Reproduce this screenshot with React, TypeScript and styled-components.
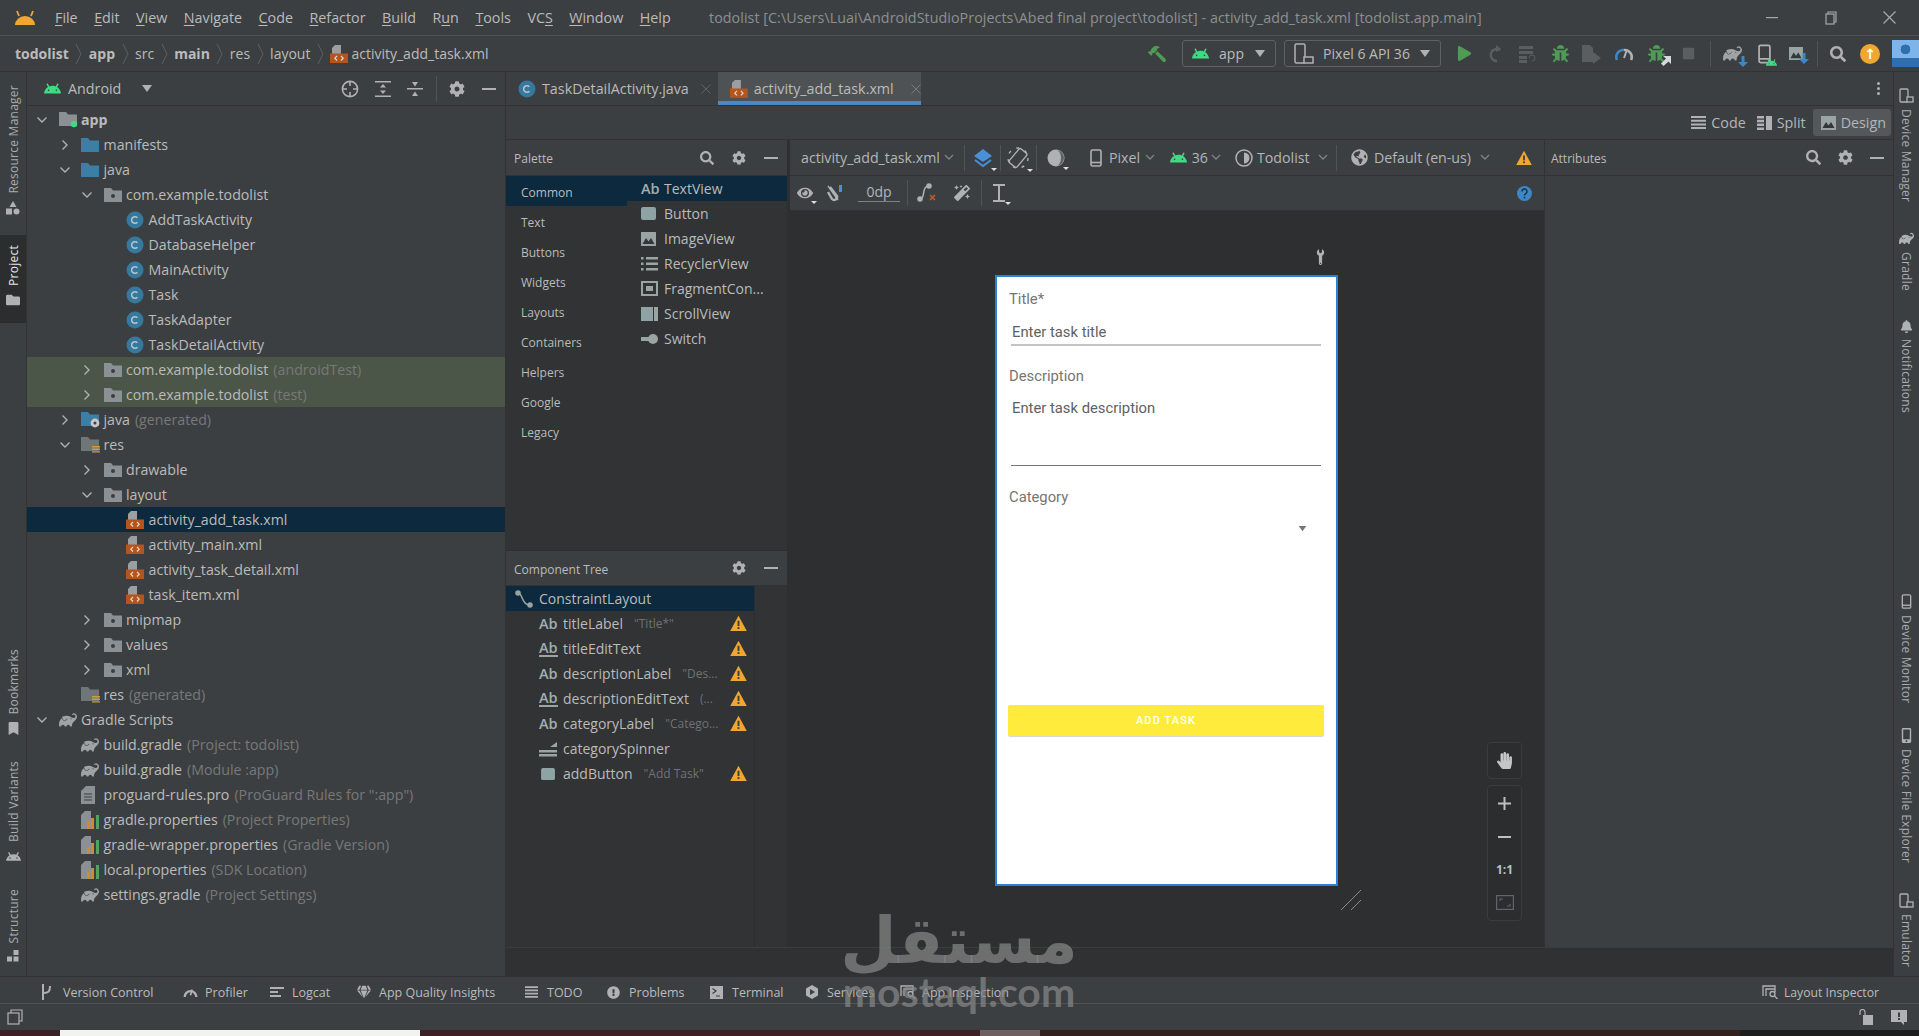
import React from 'react'
import styled, { createGlobalStyle } from 'styled-components'
import { SiAndroid, SiGradle } from 'react-icons/si'
import {
  FaBug, FaCog, FaEye, FaGlobeAmericas, FaHandPaper, FaMagic, FaPlay, FaSearch, FaWrench,
  FaBookmark, FaBell, FaMobileAlt, FaFolder, FaStop, FaHammer, FaExclamationCircle, FaGem,
} from 'react-icons/fa'

const UI = `"Open Sans", "Noto Sans", sans-serif`
const GREY = '#afb1b3'

const GlobalStyle = createGlobalStyle`
    html, body { margin: 0; padding: 0; background: #3c3f41; }
    body { font-family: ${UI}; font-size: 13px; color: #bbbbbb; overflow: hidden; }
    * { box-sizing: border-box; }
`

/* ---------- styles ---------- */

const Page = styled.div`
    position: relative;
    width: 1919px;
    height: 1036px;
    display: flex;
    flex-direction: column;
    background: #3c3f41;
    overflow: hidden;
`

const TitleBar = styled.header`
    height: 36px;
    display: flex;
    align-items: center;
    border-bottom: 1px solid #515456;
    flex: none;
`

const LogoSlot = styled.div`
    width: 55px;
    padding-left: 14px;
    display: flex;
`

const MenuRow = styled.nav`
    display: flex;
    gap: 16.5px;
    width: 654px;
`

const MenuEntry = styled.span`
    font-size: 14.3px;
    color: #bbbbbb;
    white-space: nowrap;
    u { text-underline-offset: 2px; }
`

const WindowTitle = styled.div`
    font-size: 14.3px;
    letter-spacing: 0.05px;
    color: #8c8f91;
    white-space: nowrap;
`

const WindowButtons = styled.div`
    margin-left: auto;
    display: flex;
`

const WindowButton = styled.div`
    width: 59px;
    height: 20px;
    display: flex;
    align-items: center;
    justify-content: center;
`

const NavBar = styled.div`
    height: 36px;
    display: flex;
    align-items: center;
    flex: none;
    border-bottom: 1px solid #323232;
`

const Crumbs = styled.div`
    display: flex;
    align-items: center;
    gap: 6.5px;
    padding-left: 15px;
`

const CrumbText = styled.span<{ $bold?: boolean }>`
    font-size: 14px;
    font-weight: ${p => (p.$bold ? 700 : 400)};
    color: #bbbbbb;
    white-space: nowrap;
`

const CrumbFile = styled.span`
    display: flex;
    align-items: center;
    gap: 3px;
`

const RunTools = styled.div`
    margin-left: auto;
    display: flex;
    align-items: center;
`

const Slot = styled.span<{ $w: number }>`
    width: ${p => p.$w}px;
    flex: none;
    display: flex;
    align-items: center;
    justify-content: center;
`

const TextSlot = styled.span<{ $w: number }>`
    width: ${p => p.$w}px;
    flex: none;
    font-size: 14.2px;
    color: #b4b6b8;
    white-space: nowrap;
`

const EndSlot = styled.span`
    margin-left: auto;
    width: 30px;
    margin-right: 5px;
    display: flex;
    justify-content: center;
`

const Sep = styled.i`
    display: block;
    width: 1px;
    height: 26px;
    background: #515456;
`

const RunCombo = styled.div<{ $w: number }>`
    width: ${p => p.$w}px;
    height: 27px;
    margin: 0 4px;
    padding: 0 9px;
    display: flex;
    align-items: center;
    justify-content: space-between;
    border: 1px solid #5e6163;
    border-radius: 3px;
    font-size: 14px;
    color: #bbbbbb;
    white-space: nowrap;
`

const Upgrade = styled.span`
    width: 20px;
    height: 20px;
    border-radius: 50%;
    background: #f0a732;
    color: #fff;
    font: 700 14px/20px "DejaVu Sans", sans-serif;
    text-align: center;
`

const Avatar = styled.span`
    width: 27px;
    height: 27px;
    margin-left: 6px;
    background: radial-gradient(circle at 50% 35%, #2f6fb0 0 22%, transparent 23%),
        linear-gradient(to top, #2f6fb0 0 35%, #7fb4ea 35%);
`

const HammerIcon = styled(FaHammer)`
    transform: scaleX(-1);
`

const Badged = styled.span`
    position: relative;
    display: flex;
`

const Badge = styled.span`
    position: absolute;
    right: -6px;
    bottom: -4px;
    display: flex;
`

const Workspace = styled.main`
    flex: 1;
    min-height: 0;
    display: flex;
`

const LeftStripe = styled.aside`
    width: 27px;
    flex: none;
    display: flex;
    flex-direction: column;
    justify-content: space-between;
    padding-bottom: 14px;
    border-right: 1px solid #323232;
`

const RightStripe = styled.aside`
    width: 26px;
    flex: none;
    display: flex;
    flex-direction: column;
    justify-content: space-between;
    padding-bottom: 9px;
    border-left: 1px solid #323232;
`

const StripeGroup = styled.div`
    display: flex;
    flex-direction: column;
`

const LeftItem = styled.div<{ $active?: boolean; $top?: number }>`
    display: flex;
    flex-direction: column;
    align-items: center;
    gap: 7px;
    margin-top: ${p => p.$top ?? 0}px;
    padding: ${p => (p.$active ? '10px 0 16px' : '0')};
    background: ${p => (p.$active ? '#2b2d2f' : 'transparent')};
`

const RightItem = styled.div<{ $top?: number }>`
    display: flex;
    flex-direction: column;
    align-items: center;
    gap: 6px;
    margin-top: ${p => p.$top ?? 0}px;
`

const StripeText = styled.span<{ $down?: boolean; $bright?: boolean }>`
    writing-mode: vertical-rl;
    transform: ${p => (p.$down ? 'none' : 'rotate(180deg)')};
    font-size: 12px;
    letter-spacing: 0.25px;
    color: ${p => (p.$bright ? '#e4e6e8' : '#a9abad')};
    white-space: nowrap;
`

const ProjectPanel = styled.section`
    width: 479px;
    flex: none;
    display: flex;
    flex-direction: column;
    border-right: 1px solid #323232;
`

const PanelHead = styled.div`
    height: 34px;
    flex: none;
    display: flex;
    align-items: center;
    justify-content: space-between;
    border-bottom: 1px solid #323232;
`

const ProjectTitle = styled.div`
    display: flex;
    align-items: center;
    gap: 7px;
    padding-left: 17px;
    font-size: 14.3px;
    color: #bbbbbb;
`

const HeadTools = styled.div`
    display: flex;
    align-items: center;
`

const Tree = styled.div`
    padding-top: 1px;
`

const TreeLine = styled.div<{ $depth: number; $tint?: 'test' | 'selected' }>`
    height: 25px;
    display: flex;
    align-items: center;
    padding-left: ${p => 6 + p.$depth * 22.5}px;
    background: ${p => (p.$tint === 'test' ? '#4b5648' : p.$tint === 'selected' ? '#0d293e' : 'transparent')};
`

const ArrowSlot = styled.span`
    width: 25.5px;
    flex: none;
    padding-left: 3px;
    display: flex;
    align-items: center;
`

const TreeIcon = styled.span`
    width: 22.5px;
    flex: none;
    display: flex;
    align-items: center;
`

const TreeLabel = styled.span<{ $bold?: boolean }>`
    font-size: 14.2px;
    font-weight: ${p => (p.$bold ? 700 : 400)};
    color: #bbbbbb;
    white-space: nowrap;
`

const TreeHint = styled.span`
    margin-left: 5px;
    font-size: 14.2px;
    color: #787878;
    white-space: nowrap;
`

const Center = styled.div`
    flex: 1;
    min-width: 0;
    display: flex;
    flex-direction: column;
`

const TabBar = styled.div`
    height: 34px;
    flex: none;
    display: flex;
    border-bottom: 1px solid #323232;
`

const Tab = styled.div<{ $w: number; $active?: boolean }>`
    width: ${p => p.$w}px;
    flex: none;
    display: flex;
    align-items: center;
    gap: 6px;
    padding-left: 12px;
    background: ${p => (p.$active ? '#4e5254' : 'transparent')};
    border-bottom: ${p => (p.$active ? '4px solid #4a88c7' : '0')};
    padding-top: ${p => (p.$active ? '4px' : '0')};
`

const TabName = styled.span`
    font-size: 14.3px;
    color: #bbbbbb;
    white-space: nowrap;
    width: 153px;
`

const Kebab = styled.div`
    margin-left: auto;
    width: 30px;
    display: flex;
    flex-direction: column;
    align-items: center;
    justify-content: center;
    gap: 2px;
    i { width: 3px; height: 3px; background: ${GREY}; border-radius: 50%; }
`

const ModeBar = styled.div`
    height: 34px;
    flex: none;
    display: flex;
    justify-content: flex-end;
    align-items: center;
    padding-right: 2px;
    border-bottom: 1px solid #323232;
`

const ModeButton = styled.div<{ $active?: boolean }>`
    height: 27px;
    display: flex;
    align-items: center;
    gap: 5px;
    padding: 0 ${p => (p.$active ? '5px' : '7px')} 0 ${p => (p.$active ? '8px' : '4px')};
    border-radius: 3px;
    background: ${p => (p.$active ? '#54585a' : 'transparent')};
    font-size: 14.3px;
    color: #b4b6b8;
`

const DesignArea = styled.div`
    flex: 1;
    min-height: 0;
    display: flex;
    flex-direction: column;
`

const DesignRow = styled.div`
    flex: 1;
    min-height: 0;
    display: flex;
`

const BottomStrip = styled.div`
    height: 29px;
    flex: none;
    background: #2f3133;
    border-top: 1px solid #3a3c3e;
`

const PaletteColumn = styled.div`
    width: 284px;
    flex: none;
    display: flex;
    flex-direction: column;
    background: #313335;
    border-right: 3px solid #2d2f31;
`

const ColumnHead = styled.div<{ $tight?: boolean }>`
    height: 36px;
    flex: none;
    display: flex;
    align-items: center;
    justify-content: space-between;
    background: #3c3f41;
    border-bottom: 1px solid #323232;
    border-top: ${p => (p.$tight ? '1px solid #2b2d2e' : '0')};
`

const HeadTitle = styled.span<{ $left?: number }>`
    padding: 2px 0 0 ${p => p.$left ?? 8}px;
    font-size: 12px;
    color: #bbbbbb;
`

const PaletteBody = styled.div`
    height: 374px;
    flex: none;
    display: flex;
`

const GroupList = styled.div`
    width: 121px;
    flex: none;
`

const GroupItem = styled.div<{ $selected?: boolean }>`
    height: 30px;
    display: flex;
    align-items: center;
    padding: 3px 0 0 15px;
    font-size: 12px;
    color: #bbbbbb;
    background: ${p => (p.$selected ? '#0d293e' : 'transparent')};
`

const ItemList = styled.div`
    flex: 1;
`

const PaletteItem = styled.div<{ $selected?: boolean }>`
    height: 25px;
    display: flex;
    align-items: center;
    font-size: 14px;
    color: #bbbbbb;
    white-space: nowrap;
    background: ${p => (p.$selected ? '#0d293e' : 'transparent')};
`

const ItemIcon = styled.span`
    width: 37px;
    flex: none;
    display: flex;
    align-items: center;
    padding-left: 14px;
`

const AbGlyph = styled.span<{ $underline?: boolean }>`
    font-size: 14.5px;
    line-height: 14px;
    color: #a3adad;
    font-weight: 600;
    border-bottom: ${p => (p.$underline ? '2px solid #9aa5a3' : '0')};
`

const TreeBody = styled.div`
    flex: 1;
    display: flex;
`

const ComponentList = styled.div`
    width: 249px;
    border-right: 1px solid #2b2d2e;
`

const RootRow = styled.div`
    height: 25px;
    display: flex;
    align-items: center;
    gap: 6px;
    padding-left: 9px;
    font-size: 14px;
    color: #bbbbbb;
    background: #0d293e;
`

const ComponentRow = styled.div`
    height: 25px;
    display: flex;
    align-items: center;
    padding-left: 33px;
    font-size: 14px;
    color: #bbbbbb;
    white-space: nowrap;
    position: relative;
`

const ComponentIcon = styled.span`
    width: 24px;
    flex: none;
    display: flex;
`

const ComponentHint = styled.span`
    margin-left: 11px;
    font-size: 12px;
    color: #707274;
`

const WarnSlot = styled.span`
    position: absolute;
    left: 224px;
    top: 4px;
    display: flex;
`

const Editor = styled.div`
    width: 755px;
    flex: none;
    display: flex;
    flex-direction: column;
    border-right: 1px solid #323232;
`

const EditorTools = styled.div<{ $short?: boolean }>`
    height: ${p => (p.$short ? 35 : 36)}px;
    flex: none;
    display: flex;
    align-items: center;
    border-bottom: 1px solid #323232;
`

const MenuMark = styled.span`
    position: relative;
    display: flex;
`

const MenuArrow = styled.i`
    position: absolute;
    right: -4px;
    bottom: -3px;
    border-left: 3px solid transparent;
    border-right: 3px solid transparent;
    border-top: 3px solid #dddddd;
`

const DpBox = styled.span`
    width: 42px;
    flex: none;
    text-align: center;
    font-size: 14px;
    line-height: 16px;
    color: #b4b6b8;
    border-bottom: 1px solid #7f8385;
    padding-bottom: 1px;
`

const Canvas = styled.div`
    flex: 1;
    min-height: 0;
    position: relative;
    padding: 64px 0 0 205px;
    background: #2d2f31;
`

const PhoneFrame = styled.div`
    position: relative;
    width: 343px;
    height: 611px;
    padding: 12px 0 0 12px;
    background: #ffffff;
    border: 2px solid #2a7fd6;
    font-family: Roboto, sans-serif;
`

const WrenchMark = styled.span`
    position: absolute;
    top: -27px;
    right: 9px;
    display: flex;
    transform: rotate(-45deg);
`

const ResizeMark = styled.span`
    position: absolute;
    right: -26px;
    bottom: -27px;
    display: flex;
`

const FieldLabel = styled.div<{ $gap?: number }>`
    height: 20px;
    margin-top: ${p => p.$gap ?? 0}px;
    font-size: 14.8px;
    line-height: 20px;
    color: #757575;
`

const FieldInput = styled.div<{ $tall?: boolean }>`
    width: 310px;
    height: ${p => (p.$tall ? 68 : 27)}px;
    margin: ${p => (p.$tall ? '12px' : '10px')} 0 0 2px;
    padding: ${p => (p.$tall ? '0' : '3px')} 0 0 1px;
    font-size: 14.8px;
    line-height: 20px;
    color: #616161;
    border-bottom: ${p => (p.$tall ? '1px solid #757575' : '2px solid #c4c4c4')};
`

const SpinnerBox = styled.div`
    width: 298px;
    height: 24px;
    margin-top: 10px;
    display: flex;
    align-items: center;
    justify-content: flex-end;
`

const AddButton = styled.div`
    width: 316px;
    height: 31px;
    margin: 164px 0 0 -1px;
    display: flex;
    align-items: center;
    justify-content: center;
    border-radius: 2px;
    background: #ffeb3b;
    box-shadow: 0 1px 1px #d5d5d5;
    font-size: 11px;
    font-weight: 500;
    letter-spacing: 1.1px;
    color: #ffffff;
`

const ZoomControls = styled.div`
    position: absolute;
    right: 22px;
    bottom: 26px;
    display: flex;
    flex-direction: column;
    gap: 6px;
`

const ZoomBox = styled.div`
    width: 35px;
    border: 1px solid #3a3c3e;
    border-radius: 4px;
    background: #2b2d2f;
    padding: 1px 0;
`

const ZoomKey = styled.div`
    height: 33px;
    display: flex;
    align-items: center;
    justify-content: center;
    font-size: 12px;
    font-weight: 700;
    color: #bdbfc1;
`

const Attributes = styled.div`
    flex: 1;
    min-width: 0;
`

const ToolStrip = styled.div`
    height: 28px;
    flex: none;
    display: flex;
    align-items: center;
    padding: 4px 0 0 41px;
    border-top: 1px solid #323232;
    border-bottom: 1px solid #515456;
`

const ToolItem = styled.div<{ $w: number }>`
    width: ${p => p.$w}px;
    flex: none;
    display: flex;
    align-items: center;
    font-size: 12.5px;
    color: #bbbbbb;
    white-space: nowrap;
`

const ToolItemEnd = styled.div`
    margin-left: auto;
    padding-right: 40px;
    display: flex;
    align-items: center;
    font-size: 12.2px;
    color: #bbbbbb;
    white-space: nowrap;
`

const ToolIcon = styled.span`
    width: 22px;
    flex: none;
    display: flex;
    align-items: center;
`

const StatusBar = styled.div`
    height: 26px;
    flex: none;
    display: flex;
    align-items: center;
    justify-content: space-between;
    padding: 0 12px 0 7px;
`

const StatusRight = styled.div`
    display: flex;
    align-items: center;
    gap: 18px;
`

const Taskbar = styled.div`
    height: 6px;
    flex: none;
    display: flex;
`

const TaskPiece = styled.span<{ $w: number; $color: string }>`
    width: ${p => p.$w}px;
    background: ${p => p.$color};
`

const Watermark = styled.div`
    position: absolute;
    left: 844px;
    top: 896px;
    width: 230px;
    display: flex;
    flex-direction: column;
    align-items: center;
    pointer-events: none;
    color: rgba(135, 135, 135, 0.72);
`

const WatermarkArabic = styled.div`
    font: 700 65px/90px "DejaVu Sans", sans-serif;
    direction: rtl;
    white-space: nowrap;
`

const WatermarkLatin = styled.div`
    margin-top: -15px;
    font: 700 41px/42px Lato, sans-serif;
    white-space: nowrap;
`

/* ---------- little drawings ---------- */

const Chevron = ({ open }: { open?: boolean }) => (
    <svg width="12" height="12" viewBox="0 0 12 12" fill="none" stroke={GREY} strokeWidth="1.4">
        <path d={open ? 'M1.5 3.5 6 8l4.5-4.5' : 'M3.5 1.5 8 6l-4.5 4.5'} />
    </svg>
)

const SmallDown = () => (
    <svg width="10" height="7" viewBox="0 0 10 7" fill="none" stroke="#7f8385" strokeWidth="1.3">
        <path d="M1 1l4 4 4-4" />
    </svg>
)

const Caret = ({ color = GREY, w = 12 }: { color?: string; w?: number }) => (
    <svg width={w} height={(w * 2) / 3} viewBox="0 0 12 8" fill={color}><path d="M1 0h10L6 7z" /></svg>
)

const Folder = ({ color = '#3d7ea6', w = 18 }: { color?: string; w?: number }) => (
    <svg width={w} height="15" viewBox="0 0 18 15" fill={color}><path d="M0 1h7l2 2.5h9V15H0z" /></svg>
)

const PackageFolder = () => (
    <svg width="18" height="15" viewBox="0 0 18 15">
        <path d="M0 1h7l2 2.5h9V15H0z" fill="#8a9094" />
        <circle cx="9" cy="9" r="2" fill="#3c3f41" />
    </svg>
)

const ModuleFolder = () => (
    <svg width="20" height="16" viewBox="0 0 20 16">
        <path d="M0 0h7l2 2.5h9V14H0z" fill="#8a9094" />
        <circle cx="15" cy="12" r="3.2" fill="#3ddc84" />
    </svg>
)

const GeneratedFolder = () => (
    <svg width="20" height="16" viewBox="0 0 20 16">
        <path d="M0 0h7l2 2.5h9V14H0z" fill="#3d7ea6" />
        <circle cx="14" cy="11" r="4.4" fill="#c5c8ca" />
        <circle cx="14" cy="11" r="1.5" fill="#3c3f41" />
    </svg>
)

const ResFolder = () => (
    <svg width="20" height="16" viewBox="0 0 20 16">
        <path d="M0 0h7l2 2.5h9V14H0z" fill="#6f767a" />
        <path d="M11 9h8v1.4h-8zM11 11.6h8V13h-8zM11 14.2h8v1.4h-8z" fill="#d19a3a" />
    </svg>
)

const ClassIcon = () => (
    <svg width="18" height="18" viewBox="0 0 18 18">
        <circle cx="9" cy="9" r="8.5" fill="#35799f" />
        <path d="M11.4 6.8A3.3 3.3 0 1 0 11.4 11.2" fill="none" stroke="#b7c4cb" strokeWidth="1.5" />
    </svg>
)

const XmlIcon = () => (
    <svg width="18" height="18" viewBox="0 0 18 18">
        <path d="M5 0h6v9H2V3z" fill="#9b9fa1" />
        <rect x="0" y="8.5" width="18" height="9.5" fill="#b5551d" />
        <path d="M7 11l-2.2 2.2L7 15.5M11 11l2.2 2.2L11 15.5" stroke="#e8e0d8" strokeWidth="1.1" fill="none" />
    </svg>
)

const TextFile = () => (
    <svg width="14" height="18" viewBox="0 0 14 18">
        <path d="M5 0h9v18H0V5z" fill="#8a9094" />
        <path d="M3 8h8M3 11h8M3 14h8" stroke="#3c3f41" strokeWidth="1" />
    </svg>
)

const PropsFile = () => (
    <svg width="18" height="18" viewBox="0 0 18 18">
        <path d="M4 0h6v18H0V4z" fill="#8a9094" />
        <rect x="6" y="11" width="3" height="7" fill="#d18a2d" />
        <rect x="10" y="7" width="3" height="11" fill="#d18a2d" />
        <rect x="15" y="4" width="3" height="14" fill="#4fa35a" />
    </svg>
)

const Warn = ({ size = 16 }: { size?: number }) => (
    <svg width={size} height={size} viewBox="0 0 16 16">
        <path d="M8 .8 15.8 15H.2z" fill="#f0a732" />
        <rect x="7.1" y="5.4" width="1.8" height="5" fill="#3c3f41" />
        <rect x="7.1" y="11.4" width="1.8" height="1.8" fill="#3c3f41" />
    </svg>
)

const Minus = () => <svg width="14" height="4" viewBox="0 0 14 4"><rect y="1" width="14" height="2" fill={GREY} /></svg>

const Crosshair = () => (
    <svg width="18" height="18" viewBox="0 0 18 18" fill="none" stroke={GREY} strokeWidth="1.6">
        <circle cx="9" cy="9" r="7.6" />
        <path d="M9 2v4M9 12v4M2 9h4M12 9h4" />
    </svg>
)

const Expand = ({ inward }: { inward?: boolean }) => (
    <svg width="16" height="16" viewBox="0 0 16 16" fill={GREY}>
        {inward ? (
            <path d="M0 7h16v1.600H0zM5 1h6L8 5.500zM5 15h6l-3-4.500z" />
        ) : (
            <path d="M0 0h16v1.600H0zM0 14.400h16V16H0zM5 6.500h6L8 3zM5 9.500h6L8 13z" />
        )}
    </svg>
)

const Lines = ({ w = 15, h = 13 }: { w?: number; h?: number }) => (
    <svg width={w} height={h} viewBox="0 0 15 13" fill={GREY}>
        <path d="M0 0h15v2H0zM0 3.700h15v2H0zM0 7.400h15v2H0zM0 11h15v2H0z" />
    </svg>
)

const SplitIcon = () => (
    <svg width="15" height="14" viewBox="0 0 15 14" fill={GREY}>
        <path d="M0 0h7v2.500H0zM0 3.800h7v2.500H0zM0 7.600h7v2.500H0zM0 11.400h7V14H0zM9 0h6v14H9z" />
    </svg>
)

const ImageIcon = ({ size = 15 }: { size?: number }) => (
    <svg width={size} height={size - 1} viewBox="0 0 15 14">
        <rect width="15" height="14" fill="#9aa5a3" />
        <path d="M1.500 12 5 6l2.500 3.500L10 6l3.500 6z" fill="#34373a" />
    </svg>
)

const ButtonIcon = ({ w = 15, h = 13 }: { w?: number; h?: number }) => (
    <svg width={w} height={h} viewBox="0 0 15 13"><rect width="15" height="13" rx="2" fill="#8ea4a4" /></svg>
)

const RecyclerIcon = () => (
    <svg width="17" height="14" viewBox="0 0 17 14" fill="#9aa5a3">
        <path d="M0 0h2.500v2.500H0zM0 5.500h2.500V8H0zM0 11h2.500v2.500H0zM5 0h12v2.500H5zM5 5.500h12V8H5zM5 11h12v2.500H5z" />
    </svg>
)

const FragmentIcon = () => (
    <svg width="17" height="15" viewBox="0 0 17 15">
        <rect x="1" y="1" width="15" height="13" fill="none" stroke="#9aa5a3" strokeWidth="2" />
        <rect x="5" y="5" width="7" height="5" fill="#9aa5a3" />
    </svg>
)

const ScrollIcon = () => (
    <svg width="17" height="14" viewBox="0 0 17 14">
        <rect width="12" height="14" fill="#8ea4a4" />
        <rect x="13" width="4" height="14" fill="#9aa5a3" />
    </svg>
)

const SwitchIcon = () => (
    <svg width="17" height="10" viewBox="0 0 17 10">
        <rect y="3" width="8" height="4" fill="#9aa5a3" />
        <circle cx="12" cy="5" r="5" fill="#9aa5a3" />
    </svg>
)

const ConstraintIcon = () => (
    <svg width="18" height="18" viewBox="0 0 18 18" fill="none" stroke="#9aa5a3" strokeWidth="1.500">
        <path d="M3 3c5 0 3 11 11 12" />
        <circle cx="3" cy="3" r="2" fill="#9aa5a3" />
        <circle cx="15" cy="15" r="2" fill="#9aa5a3" />
    </svg>
)

const SpinnerIcon = () => (
    <svg width="18" height="16" viewBox="0 0 18 16" fill="#9aa5a3">
        <path d="M0 6h11l7-5v5zM0 9h18v2.500H0zM0 13h18v2.500H0z" />
    </svg>
)

const PhoneIcon = ({ w = 12, h = 18 }: { w?: number; h?: number }) => (
    <svg width={w} height={h} viewBox="0 0 12 18" fill="none" stroke={GREY} strokeWidth="1.600">
        <rect x="1" y="1" width="10" height="16" rx="1.500" />
        <path d="M1 13.500h10" />
    </svg>
)

const DevicesIcon = () => (
    <svg width="20" height="22" viewBox="0 0 20 22" fill="none" stroke={GREY} strokeWidth="1.500">
        <rect x="1" y="1" width="10" height="19" rx="1.500" />
        <rect x="10" y="14" width="9" height="6" fill="#3c3f41" />
    </svg>
)

const DevicesIconSmall = () => (
    <svg width="15" height="15" viewBox="0 0 15 15" fill="none" stroke={GREY} strokeWidth="1.300">
        <rect x="1" y="1" width="8" height="13" rx="1" />
        <rect x="8" y="9" width="6" height="5" fill="#3c3f41" />
    </svg>
)

const Rerun = () => (
    <svg width="18" height="20" viewBox="0 0 18 20" fill="none" stroke="#5b5e60" strokeWidth="2.400">
        <path d="M13 6a6 6 0 1 0-3 11" />
        <path d="M9 1l5 4-5 3z" fill="#5b5e60" stroke="none" />
    </svg>
)

const ApplyChanges = () => (
    <svg width="18" height="18" viewBox="0 0 18 18" fill="#5b5e60">
        <path d="M0 1h14v3H0zM0 6h14v3H0zM0 11h8v3H0zM0 15h8v3H0z" />
        <path d="M10 13a3 3 0 1 1 3 3" stroke="#5b5e60" fill="none" />
    </svg>
)

const AttachDebug = () => (
    <svg width="20" height="22" viewBox="0 0 20 22">
        <path d="M0 2h8l3 3v14H0z" fill="#5b5e60" />
        <path d="M11 9l8 6-8 6z" fill="#5b5e60" />
    </svg>
)

const Gauge = () => (
    <svg width="18" height="14" viewBox="0 0 18 14" fill="none" strokeWidth="2.600">
        <path d="M2 13A7 7 0 0 1 9 3" stroke="#3b87c7" />
        <path d="M9 3a7 7 0 0 1 7 10" stroke={GREY} />
        <path d="M11.500 4 9 11" stroke={GREY} strokeWidth="2" />
    </svg>
)

const GaugeGrey = () => (
    <svg width="15" height="12" viewBox="0 0 18 14" fill="none" stroke={GREY} strokeWidth="2.800">
        <path d="M2 13a7 7 0 0 1 14 0" />
        <path d="M11 4 9 11" strokeWidth="2" />
    </svg>
)

const DownArrow = ({ color = '#3b87c7' }: { color?: string }) => (
    <svg width="10" height="11" viewBox="0 0 10 11" fill={color}><path d="M3.500 0h3v6H10l-5 5-5-5h3.500z" /></svg>
)

const ArrowOut = () => (
    <svg width="10" height="10" viewBox="0 0 10 10" fill="#d8d8d8"><path d="M2 0h8v8L7.500 5.500 2.500 10 0 7.500l5-5z" /></svg>
)

const Shapes = () => (
    <svg width="14" height="14" viewBox="0 0 14 14" fill={GREY}>
        <path d="M7 0l3.500 6h-7z" />
        <rect y="7.500" width="6" height="6" />
        <circle cx="10.500" cy="10.500" r="3" />
    </svg>
)

const Blocks = () => (
    <svg width="12" height="12" viewBox="0 0 12 12" fill={GREY}>
        <rect x="6.500" width="5" height="5" />
        <rect y="6.500" width="5" height="5" />
        <rect x="6.500" y="6.500" width="5" height="5" />
    </svg>
)

const Layers = () => (
    <svg width="20" height="20" viewBox="0 0 20 20">
        <path d="M10 1l9 7-9 6-9-6z" fill="#4a90d9" />
        <path d="M2 12l8 6 8-6" fill="none" stroke="#4a90d9" strokeWidth="2" />
    </svg>
)

const Rotate = () => (
    <svg width="22" height="22" viewBox="0 0 22 22" fill="none" stroke={GREY} strokeWidth="1.400">
        <rect x="6" y="2" width="10" height="18" rx="2" transform="rotate(40 11 11)" />
        <circle cx="11" cy="11" r="10" strokeDasharray="3 6" />
    </svg>
)

const Night = () => (
    <svg width="18" height="18" viewBox="0 0 18 18">
        <circle cx="9" cy="9" r="8.500" fill={GREY} />
        <path d="M9 1a8 8 0 0 1 0 16 5 8 0 0 0 0-16z" fill="#5f6365" />
    </svg>
)

const ThemeRing = () => (
    <svg width="18" height="18" viewBox="0 0 18 18">
        <circle cx="9" cy="9" r="8" fill="none" stroke={GREY} strokeWidth="1.500" />
        <path d="M9 3.500a5.500 5.500 0 0 1 0 11z" fill={GREY} />
    </svg>
)

const MagnetOff = () => (
    <svg width="18" height="18" viewBox="0 0 18 18" fill="none" stroke={GREY} strokeWidth="2.400">
        <path d="M4 3l7 9a3 3 0 0 1-5 3L2 8" />
        <path d="M2 2l10 14" strokeWidth="1.400" />
        <rect x="13" y="1" width="3" height="7" fill="#4a90d9" stroke="none" />
    </svg>
)

const Bezier = () => (
    <svg width="20" height="20" viewBox="0 0 20 20" fill="none" stroke={GREY} strokeWidth="1.500">
        <path d="M3 16c6 0 1-12 8-13" />
        <circle cx="3" cy="16" r="2" fill={GREY} />
        <circle cx="12" cy="3" r="2" fill={GREY} />
        <path d="M13 12l5 5M18 12l-5 5" stroke="#c75b2a" />
    </svg>
)

const MarginIcon = () => (
    <svg width="14" height="18" viewBox="0 0 14 18" fill={GREY}>
        <path d="M0 0h12v2H0zM0 16h12v2H0zM5 2h2v14H5z" />
    </svg>
)

const Help = () => (
    <svg width="15" height="15" viewBox="0 0 15 15">
        <circle cx="7.500" cy="7.500" r="7.500" fill="#3b87c7" />
        <path d="M5 5.500a2.500 2.500 0 1 1 3.500 2.300c-.7.400-1 .7-1 1.700" fill="none" stroke="#26323a" strokeWidth="1.500" />
        <rect x="6.700" y="10.800" width="1.600" height="1.600" fill="#26323a" />
    </svg>
)

const Restore = () => (
    <svg width="12" height="14" viewBox="0 0 12 14" fill="none" stroke="#a6a8aa" strokeWidth="1.200">
        <rect x="1" y="3" width="8" height="10" />
        <path d="M3 3V1h8v10H9" />
    </svg>
)

const CloseX = ({ size = 13, color = '#a6a8aa' }: { size?: number; color?: string }) => (
    <svg width={size} height={size} viewBox="0 0 13 13" fill="none" stroke={color} strokeWidth="1.200">
        <path d="M.5.5l12 12M12.500.5l-12 12" />
    </svg>
)

const Logo = () => (
    <svg width="22" height="15" viewBox="0 0 22 15">
        <path d="M1 15a10 9 0 0 1 20 0z" fill="#f0a732" />
        <path d="M5 6 3 1M17 6l2-5" stroke="#f0a732" strokeWidth="1.800" />
    </svg>
)

const Crumb = () => (
    <svg width="7" height="20" viewBox="0 0 7 20" fill="none" stroke="#5e6163" strokeWidth="1">
        <path d="M1 0l5 10-5 10" />
    </svg>
)

const VcsIcon = () => (
    <svg width="11" height="16" viewBox="0 0 11 16" fill="none" stroke={GREY} strokeWidth="2">
        <path d="M2 0v16M2 9c6 0 7-2 7-7" />
    </svg>
)

const LogIcon = () => (
    <svg width="14" height="11" viewBox="0 0 14 11" fill={GREY}><path d="M0 0h14v2H0zM0 4h8v2H0zM0 8h11v2H0z" /></svg>
)

const TermIcon = () => (
    <svg width="13" height="13" viewBox="0 0 13 13">
        <rect width="13" height="13" fill={GREY} />
        <path d="M2.500 2.500 6 5 2.500 7.500M6 10h4" fill="none" stroke="#3c3f41" strokeWidth="1.200" />
    </svg>
)

const HexPlay = () => (
    <svg width="14" height="14" viewBox="0 0 14 14">
        <path d="M7 0l6 3.500v7L7 14l-6-3.500v-7z" fill={GREY} />
        <path d="M5 4l5 3-5 3z" fill="#3c3f41" />
    </svg>
)

const InspectIcon = () => (
    <svg width="16" height="14" viewBox="0 0 16 14" fill="none" stroke={GREY} strokeWidth="1.300">
        <path d="M1 11V1h12v3M4 11V4h9v3" />
        <circle cx="10.500" cy="9" r="2.500" />
        <path d="M12.500 11l3 3" />
    </svg>
)

const StatusFrame = () => (
    <svg width="16" height="16" viewBox="0 0 16 16" fill="none" stroke={GREY} strokeWidth="1.200">
        <rect x="1" y="4" width="11" height="11" />
        <path d="M4 4V1h11v11h-3" />
    </svg>
)

const LockOpen = () => (
    <svg width="14" height="16" viewBox="0 0 14 16" fill={GREY}>
        <rect x="4" y="6" width="10" height="10" />
        <path d="M1 6V3a2.500 2.500 0 0 1 5 0v3" fill="none" stroke={GREY} strokeWidth="1.200" />
    </svg>
)

const Feedback = () => (
    <svg width="16" height="15" viewBox="0 0 16 15">
        <path d="M0 0h16v12h-3v3l-3-3H0z" fill={GREY} />
        <rect x="7" y="2.500" width="2" height="4.500" fill="#3c3f41" />
        <rect x="7" y="8" width="2" height="2" fill="#3c3f41" />
    </svg>
)

const FitIcon = () => (
    <svg width="18" height="15" viewBox="0 0 18 15" fill="none" stroke="#626567" strokeWidth="1.200">
        <rect x=".6" y=".6" width="16.800" height="13.800" />
        <path d="M4 6V4h3M14 9v2h-3" />
    </svg>
)

const ResizeHandle = () => (
    <svg width="22" height="22" viewBox="0 0 22 22" fill="none" stroke="#8a8c8e" strokeWidth="1">
        <path d="M1 21 21 1M11 21l10-10" />
    </svg>
)

const WithMenu = ({ children }: { children: React.ReactNode }) => (
    <MenuMark>{children}<MenuArrow /></MenuMark>
)

/* ---------- data ---------- */

const android = <SiAndroid size={17} color="#3ddc84" />
const cog = <FaCog size={14} color={GREY} />
const search = <FaSearch size={14} color={GREY} />
const gradleIcon = <SiGradle size={18} color="#9fa3a5" />

type TreeRow = {
    depth: number
    arrow?: 'open' | 'closed'
    icon: React.ReactNode
    label: string
    hint?: string
    bold?: boolean
    tint?: 'test' | 'selected'
}

const pkg = <PackageFolder />
const blue = <Folder />
const cls = <ClassIcon />
const xml = <XmlIcon />

const treeRows: TreeRow[] = [
    { depth: 0, arrow: 'open', icon: <ModuleFolder />, label: 'app', bold: true },
    { depth: 1, arrow: 'closed', icon: blue, label: 'manifests' },
    { depth: 1, arrow: 'open', icon: blue, label: 'java' },
    { depth: 2, arrow: 'open', icon: pkg, label: 'com.example.todolist' },
    { depth: 3, icon: cls, label: 'AddTaskActivity' },
    { depth: 3, icon: cls, label: 'DatabaseHelper' },
    { depth: 3, icon: cls, label: 'MainActivity' },
    { depth: 3, icon: cls, label: 'Task' },
    { depth: 3, icon: cls, label: 'TaskAdapter' },
    { depth: 3, icon: cls, label: 'TaskDetailActivity' },
    { depth: 2, arrow: 'closed', icon: pkg, label: 'com.example.todolist', hint: '(androidTest)', tint: 'test' },
    { depth: 2, arrow: 'closed', icon: pkg, label: 'com.example.todolist', hint: '(test)', tint: 'test' },
    { depth: 1, arrow: 'closed', icon: <GeneratedFolder />, label: 'java', hint: '(generated)' },
    { depth: 1, arrow: 'open', icon: <ResFolder />, label: 'res' },
    { depth: 2, arrow: 'closed', icon: pkg, label: 'drawable' },
    { depth: 2, arrow: 'open', icon: pkg, label: 'layout' },
    { depth: 3, icon: xml, label: 'activity_add_task.xml', tint: 'selected' },
    { depth: 3, icon: xml, label: 'activity_main.xml' },
    { depth: 3, icon: xml, label: 'activity_task_detail.xml' },
    { depth: 3, icon: xml, label: 'task_item.xml' },
    { depth: 2, arrow: 'closed', icon: pkg, label: 'mipmap' },
    { depth: 2, arrow: 'closed', icon: pkg, label: 'values' },
    { depth: 2, arrow: 'closed', icon: pkg, label: 'xml' },
    { depth: 1, icon: <ResFolder />, label: 'res', hint: '(generated)' },
    { depth: 0, arrow: 'open', icon: gradleIcon, label: 'Gradle Scripts' },
    { depth: 1, icon: gradleIcon, label: 'build.gradle', hint: '(Project: todolist)' },
    { depth: 1, icon: gradleIcon, label: 'build.gradle', hint: '(Module :app)' },
    { depth: 1, icon: <TextFile />, label: 'proguard-rules.pro', hint: '(ProGuard Rules for ":app")' },
    { depth: 1, icon: <PropsFile />, label: 'gradle.properties', hint: '(Project Properties)' },
    { depth: 1, icon: <PropsFile />, label: 'gradle-wrapper.properties', hint: '(Gradle Version)' },
    { depth: 1, icon: <PropsFile />, label: 'local.properties', hint: '(SDK Location)' },
    { depth: 1, icon: gradleIcon, label: 'settings.gradle', hint: '(Project Settings)' },
]

const menus = [
    ['F', 'ile'], ['E', 'dit'], ['V', 'iew'], ['N', 'avigate'], ['C', 'ode'], ['R', 'efactor'],
    ['B', 'uild'], ['R', 'un'], ['T', 'ools'], ['VC', 'S'], ['W', 'indow'], ['H', 'elp'],
]

const crumbs: [string, boolean][] = [
    ['todolist', true], ['app', true], ['src', false], ['main', true], ['res', false], ['layout', false],
]

const paletteGroups = ['Common', 'Text', 'Buttons', 'Widgets', 'Layouts', 'Containers', 'Helpers', 'Google', 'Legacy']

const abIcon = <AbGlyph>Ab</AbGlyph>
const abLine = <AbGlyph $underline>Ab</AbGlyph>

const paletteItems: [React.ReactNode, string][] = [
    [abIcon, 'TextView'],
    [<ButtonIcon key="b" />, 'Button'],
    [<ImageIcon key="c" />, 'ImageView'],
    [<RecyclerIcon key="d" />, 'RecyclerView'],
    [<FragmentIcon key="e" />, 'FragmentCon...'],
    [<ScrollIcon key="f" />, 'ScrollView'],
    [<SwitchIcon key="g" />, 'Switch'],
]

const componentRows: { icon: React.ReactNode; name: string; hint?: string; warn?: boolean }[] = [
    { icon: abIcon, name: 'titleLabel', hint: '"Title*"', warn: true },
    { icon: abLine, name: 'titleEditText', warn: true },
    { icon: abIcon, name: 'descriptionLabel', hint: '"Des...', warn: true },
    { icon: abLine, name: 'descriptionEditText', hint: '(...', warn: true },
    { icon: abIcon, name: 'categoryLabel', hint: '"Catego...', warn: true },
    { icon: <SpinnerIcon />, name: 'categorySpinner' },
    { icon: <ButtonIcon w={18} h={12} />, name: 'addButton', hint: '"Add Task"', warn: true },
]

const toolItems: { icon: React.ReactNode; label: string; w: number }[] = [
    { icon: <VcsIcon />, label: 'Version Control', w: 142 },
    { icon: <GaugeGrey />, label: 'Profiler', w: 87 },
    { icon: <LogIcon />, label: 'Logcat', w: 87 },
    { icon: <FaGem size={14} color={GREY} />, label: 'App Quality Insights', w: 168 },
    { icon: <Lines w={13} h={12} />, label: 'TODO', w: 82 },
    { icon: <FaExclamationCircle size={13} color={GREY} />, label: 'Problems', w: 103 },
    { icon: <TermIcon />, label: 'Terminal', w: 95 },
    { icon: <HexPlay />, label: 'Services', w: 95 },
    { icon: <InspectIcon />, label: 'App Inspection', w: 110 },
]

/* ---------- page ---------- */

const App = () => (
    <Page>
        <GlobalStyle />

        <TitleBar>
            <LogoSlot><Logo /></LogoSlot>
            <MenuRow>
                {menus.map(([key, rest], i) => (
                    <MenuEntry key={i}>
                        {key === 'R' && rest === 'un' ? <>R<u>u</u>n</> : key === 'VC' ? <>VC<u>S</u></> : <><u>{key}</u>{rest}</>}
                    </MenuEntry>
                ))}
            </MenuRow>
            <WindowTitle>todolist [C:\Users\Luai\AndroidStudioProjects\Abed final project\todolist] - activity_add_task.xml [todolist.app.main]</WindowTitle>
            <WindowButtons>
                <WindowButton><svg width="12" height="2"><rect width="12" height="1.200" fill="#a6a8aa" /></svg></WindowButton>
                <WindowButton><Restore /></WindowButton>
                <WindowButton><CloseX /></WindowButton>
            </WindowButtons>
        </TitleBar>

        <NavBar>
            <Crumbs>
                {crumbs.map(([name, bold]) => (
                    <React.Fragment key={name}>
                        <CrumbText $bold={bold}>{name}</CrumbText>
                        <Crumb />
                    </React.Fragment>
                ))}
                <CrumbFile><XmlIcon /><CrumbText>activity_add_task.xml</CrumbText></CrumbFile>
            </Crumbs>
            <RunTools>
                <Slot $w={42}><HammerIcon size={18} color="#4f9a55" /></Slot>
                <RunCombo $w={94}>{android}<span>app</span><Caret /></RunCombo>
                <RunCombo $w={157}><DevicesIcon /><span>Pixel 6 API 36</span><Caret /></RunCombo>
                <Slot $w={3} />
                <Slot $w={32}><FaPlay size={15} color="#4f9a55" /></Slot>
                <Slot $w={32}><Rerun /></Slot>
                <Slot $w={32}><ApplyChanges /></Slot>
                <Slot $w={32}><FaBug size={17} color="#4f9a55" /></Slot>
                <Slot $w={32}><AttachDebug /></Slot>
                <Slot $w={32}><Gauge /></Slot>
                <Slot $w={32}><Badged><FaBug size={17} color="#4f9a55" /><Badge><ArrowOut /></Badge></Badged></Slot>
                <Slot $w={32}><FaStop size={13} color="#5b5e60" /></Slot>
                <Slot $w={12}><Sep /></Slot>
                <Slot $w={32}><Badged><SiGradle size={19} color="#9fa3a5" /><Badge><DownArrow /></Badge></Badged></Slot>
                <Slot $w={32}><Badged><PhoneIcon w={13} h={20} /><Badge><SiAndroid size={11} color="#3ddc84" /></Badge></Badged></Slot>
                <Slot $w={32}><Badged><ImageIcon size={14} /><Badge><DownArrow /></Badge></Badged></Slot>
                <Slot $w={10}><Sep /></Slot>
                <Slot $w={32}><FaSearch size={16} color={GREY} /></Slot>
                <Slot $w={32}><Upgrade>↑</Upgrade></Slot>
                <Avatar />
            </RunTools>
        </NavBar>

        <Workspace>
            <LeftStripe>
                <StripeGroup>
                    <LeftItem $top={13}><StripeText>Resource Manager</StripeText><Shapes /></LeftItem>
                    <LeftItem $active $top={20}><StripeText $bright>Project</StripeText><FaFolder size={14} color={GREY} /></LeftItem>
                </StripeGroup>
                <StripeGroup>
                    <LeftItem><StripeText>Bookmarks</StripeText><FaBookmark size={13} color={GREY} /></LeftItem>
                    <LeftItem $top={26}><StripeText>Build Variants</StripeText><SiAndroid size={15} color={GREY} /></LeftItem>
                    <LeftItem $top={25}><StripeText>Structure</StripeText><Blocks /></LeftItem>
                </StripeGroup>
            </LeftStripe>

            <ProjectPanel>
                <PanelHead>
                    <ProjectTitle>{android}<span>Android</span><Slot $w={38}><Caret /></Slot></ProjectTitle>
                    <HeadTools>
                        <Slot $w={33}><Crosshair /></Slot>
                        <Slot $w={33}><Expand /></Slot>
                        <Slot $w={32}><Expand inward /></Slot>
                        <Slot $w={10}><Sep /></Slot>
                        <Slot $w={32}><FaCog size={16} color={GREY} /></Slot>
                        <Slot $w={32}><Minus /></Slot>
                    </HeadTools>
                </PanelHead>
                <Tree>
                    {treeRows.map((row, i) => (
                        <TreeLine key={i} $depth={row.depth} $tint={row.tint}>
                            <ArrowSlot>{row.arrow && <Chevron open={row.arrow === 'open'} />}</ArrowSlot>
                            <TreeIcon>{row.icon}</TreeIcon>
                            <TreeLabel $bold={row.bold}>{row.label}</TreeLabel>
                            {row.hint && <TreeHint>{row.hint}</TreeHint>}
                        </TreeLine>
                    ))}
                </Tree>
            </ProjectPanel>

            <Center>
                <TabBar>
                    <Tab $w={212}>
                        <ClassIcon /><TabName>TaskDetailActivity.java</TabName><CloseX size={10} color="#626567" />
                    </Tab>
                    <Tab $w={203} $active>
                        <XmlIcon /><TabName>activity_add_task.xml</TabName><CloseX size={10} color="#7d8082" />
                    </Tab>
                    <Kebab><i /><i /><i /></Kebab>
                </TabBar>

                <ModeBar>
                    <ModeButton><Lines /><span>Code</span></ModeButton>
                    <ModeButton><SplitIcon /><span>Split</span></ModeButton>
                    <ModeButton $active><ImageIcon /><span>Design</span></ModeButton>
                </ModeBar>

                <DesignArea>
                    <DesignRow>
                        <PaletteColumn>
                            <ColumnHead>
                                <HeadTitle>Palette</HeadTitle>
                                <HeadTools>
                                    <Slot $w={32}>{search}</Slot>
                                    <Slot $w={32}>{cog}</Slot>
                                    <Slot $w={32}><Minus /></Slot>
                                </HeadTools>
                            </ColumnHead>
                            <PaletteBody>
                                <GroupList>
                                    {paletteGroups.map((g, i) => <GroupItem key={g} $selected={i === 0}>{g}</GroupItem>)}
                                </GroupList>
                                <ItemList>
                                    {paletteItems.map(([icon, name], i) => (
                                        <PaletteItem key={name} $selected={i === 0}><ItemIcon>{icon}</ItemIcon>{name}</PaletteItem>
                                    ))}
                                </ItemList>
                            </PaletteBody>
                            <ColumnHead $tight>
                                <HeadTitle>Component Tree</HeadTitle>
                                <HeadTools>
                                    <Slot $w={32}>{cog}</Slot>
                                    <Slot $w={32}><Minus /></Slot>
                                </HeadTools>
                            </ColumnHead>
                            <TreeBody>
                                <ComponentList>
                                    <RootRow><ConstraintIcon />ConstraintLayout</RootRow>
                                    {componentRows.map(row => (
                                        <ComponentRow key={row.name}>
                                            <ComponentIcon>{row.icon}</ComponentIcon>
                                            <span>{row.name}</span>
                                            {row.hint && <ComponentHint>{row.hint}</ComponentHint>}
                                            {row.warn && <WarnSlot><Warn size={17} /></WarnSlot>}
                                        </ComponentRow>
                                    ))}
                                </ComponentList>
                            </TreeBody>
                        </PaletteColumn>

                        <Editor>
                            <EditorTools>
                                <Slot $w={11} />
                                <TextSlot $w={138}>activity_add_task.xml</TextSlot>
                                <Slot $w={20}><SmallDown /></Slot>
                                <Slot $w={10}><Sep /></Slot>
                                <Slot $w={28}><WithMenu><Layers /></WithMenu></Slot>
                                <Slot $w={6}><Sep /></Slot>
                                <Slot $w={30}><WithMenu><Rotate /></WithMenu></Slot>
                                <Slot $w={6}><Sep /></Slot>
                                <Slot $w={34}><WithMenu><Night /></WithMenu></Slot>
                                <Slot $w={10} />
                                <Slot $w={26}><PhoneIcon /></Slot>
                                <TextSlot $w={34}>Pixel</TextSlot>
                                <Slot $w={14}><SmallDown /></Slot>
                                <Slot $w={11} />
                                <Slot $w={20}>{android}</Slot>
                                <TextSlot $w={20}>&nbsp;36</TextSlot>
                                <Slot $w={16}><SmallDown /></Slot>
                                <Slot $w={7} />
                                <Slot $w={26}><ThemeRing /></Slot>
                                <TextSlot $w={58}>Todolist</TextSlot>
                                <Slot $w={16}><SmallDown /></Slot>
                                <Slot $w={10}><Sep /></Slot>
                                <Slot $w={4} />
                                <Slot $w={29}><FaGlobeAmericas size={17} color={GREY} /></Slot>
                                <TextSlot $w={102}>Default (en-us)</TextSlot>
                                <Slot $w={18}><SmallDown /></Slot>
                                <EndSlot><Warn /></EndSlot>
                            </EditorTools>
                            <EditorTools $short>
                                <Slot $w={30}><WithMenu><FaEye size={16} color={GREY} /></WithMenu></Slot>
                                <Slot $w={30}><MagnetOff /></Slot>
                                <Slot $w={8} />
                                <DpBox>0dp</DpBox>
                                <Slot $w={5} />
                                <Slot $w={4}><Sep /></Slot>
                                <Slot $w={36}><Bezier /></Slot>
                                <Slot $w={34}><FaMagic size={16} color={GREY} /></Slot>
                                <Slot $w={4}><Sep /></Slot>
                                <Slot $w={34}><WithMenu><MarginIcon /></WithMenu></Slot>
                                <EndSlot><Help /></EndSlot>
                            </EditorTools>
                            <Canvas>
                                <PhoneFrame>
                                    <WrenchMark><FaWrench size={13} color={GREY} /></WrenchMark>
                                    <FieldLabel>Title*</FieldLabel>
                                    <FieldInput>Enter task title</FieldInput>
                                    <FieldLabel $gap={20}>Description</FieldLabel>
                                    <FieldInput $tall>Enter task description</FieldInput>
                                    <FieldLabel $gap={21}>Category</FieldLabel>
                                    <SpinnerBox><Caret color="#757575" w={9} /></SpinnerBox>
                                    <AddButton>ADD TASK</AddButton>
                                    <ResizeMark><ResizeHandle /></ResizeMark>
                                </PhoneFrame>
                                <ZoomControls>
                                    <ZoomBox><ZoomKey><FaHandPaper size={17} color="#c4c6c8" /></ZoomKey></ZoomBox>
                                    <ZoomBox>
                                        <ZoomKey>
                                            <svg width="13" height="13" viewBox="0 0 13 13" fill="#bdbfc1"><path d="M5.500 0h2v5.500H13v2H7.500V13h-2V7.500H0v-2h5.500z" /></svg>
                                        </ZoomKey>
                                        <ZoomKey><svg width="13" height="2" fill="#bdbfc1"><rect width="13" height="2" /></svg></ZoomKey>
                                        <ZoomKey>1:1</ZoomKey>
                                        <ZoomKey><FitIcon /></ZoomKey>
                                    </ZoomBox>
                                </ZoomControls>
                            </Canvas>
                        </Editor>

                        <Attributes>
                            <ColumnHead>
                                <HeadTitle $left={6}>Attributes</HeadTitle>
                                <HeadTools>
                                    <Slot $w={32}><FaSearch size={15} color={GREY} /></Slot>
                                    <Slot $w={32}><FaCog size={15} color={GREY} /></Slot>
                                    <Slot $w={32}><Minus /></Slot>
                                </HeadTools>
                            </ColumnHead>
                        </Attributes>
                    </DesignRow>
                    <BottomStrip />
                </DesignArea>
            </Center>

            <RightStripe>
                <StripeGroup>
                    <RightItem $top={16}><DevicesIconSmall /><StripeText $down>Device Manager</StripeText></RightItem>
                    <RightItem $top={29}><SiGradle size={15} color={GREY} /><StripeText $down>Gradle</StripeText></RightItem>
                    <RightItem $top={29}><FaBell size={13} color={GREY} /><StripeText $down>Notifications</StripeText></RightItem>
                </StripeGroup>
                <StripeGroup>
                    <RightItem><PhoneIcon w={11} h={15} /><StripeText $down>Device Monitor</StripeText></RightItem>
                    <RightItem $top={24}><FaMobileAlt size={15} color={GREY} /><StripeText $down>Device File Explorer</StripeText></RightItem>
                    <RightItem $top={30}><DevicesIconSmall /><StripeText $down>Emulator</StripeText></RightItem>
                </StripeGroup>
            </RightStripe>
        </Workspace>

        <ToolStrip>
            {toolItems.map(item => (
                <ToolItem key={item.label} $w={item.w}><ToolIcon>{item.icon}</ToolIcon>{item.label}</ToolItem>
            ))}
            <ToolItemEnd><ToolIcon><InspectIcon /></ToolIcon>Layout Inspector</ToolItemEnd>
        </ToolStrip>

        <StatusBar>
            <StatusFrame />
            <StatusRight><LockOpen /><Feedback /></StatusRight>
        </StatusBar>

        <Taskbar>
            <TaskPiece $w={60} $color="#3d2024" />
            <TaskPiece $w={360} $color="#f2f2ee" />
            <TaskPiece $w={560} $color="#3d2024" />
            <TaskPiece $w={60} $color="#6f5f5f" />
            <TaskPiece $w={700} $color="#33201f" />
            <TaskPiece $w={179} $color="#1f1e1e" />
        </Taskbar>

        <Watermark>
            <WatermarkArabic>مستقل</WatermarkArabic>
            <WatermarkLatin>mostaql.com</WatermarkLatin>
        </Watermark>
    </Page>
)

export default App
